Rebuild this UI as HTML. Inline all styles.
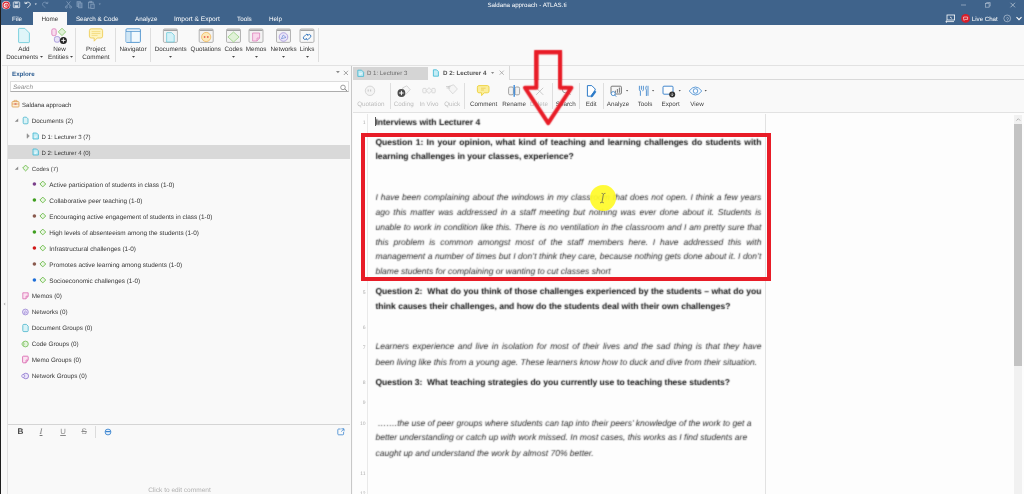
<!DOCTYPE html>
<html lang="en">
<head>
<meta charset="utf-8">
<title>Saldana approach - ATLAS.ti</title>
<style>
html,body{margin:0;padding:0;}
body{width:1024px;height:494px;overflow:hidden;position:relative;background:#f9f9f9;font-family:"Liberation Sans",sans-serif;font-size:6.3px;color:#3a3a3a;text-rendering:geometricPrecision;}
.a{position:absolute;}
.t{position:absolute;white-space:nowrap;line-height:8px;font-size:6.3px;margin-top:1.1px;}
.w{color:#fff;}
.c{text-align:center;transform:translateX(-50%);}
.rl{color:#333;}
.dis{color:#bcbcbc;}
.sep{position:absolute;width:1px;background:#dedede;}
.hl{position:absolute;height:1px;background:#e2e2e2;}
.doc{position:absolute;left:375.4px;width:386px;font-size:8.54px;line-height:14px;height:14px;color:#333;white-space:nowrap;margin:0;}
.doc b{color:#111;}
.doc i{color:#2c2c2c;}
.ln{position:absolute;font-size:5px;color:#adadad;width:10px;text-align:right;left:355.5px;line-height:6px;}
svg{position:absolute;overflow:visible;}
svg.sf{filter:url(#soft);}
.doc{filter:url(#soft);}
</style>
</head>
<body>
<div id="app" style="position:absolute;left:0;top:0;width:1024px;height:494px;will-change:transform;">
<svg class="defs" width="0" height="0" style="position:absolute"><defs><filter id="soft" x="-5%" y="-5%" width="110%" height="110%" color-interpolation-filters="sRGB"><feConvolveMatrix order="3" kernelMatrix="1 3 1 3 12 3 1 3 1" divisor="28" edgeMode="none" preserveAlpha="false"/></filter></defs></svg>
<div class="a" style="left:0;top:0;width:1024px;height:25px;background:#3f638b;"></div>
<div class="a" style="left:33px;top:12px;width:34px;height:14px;background:#f9f9f9;"></div>
<div class="t w" style="left:11.9px;top:14.5px;">File</div>
<div class="t " style="left:41.4px;top:14.5px;color:#333;">Home</div>
<div class="t w" style="left:75.9px;top:14.5px;">Search &amp; Code</div>
<div class="t w" style="left:135px;top:14.5px;">Analyze</div>
<div class="t w" style="left:174px;top:14.5px;font-size:6.6px;">Import &amp; Export</div>
<div class="t w" style="left:237px;top:14.5px;">Tools</div>
<div class="t w" style="left:269px;top:14.5px;">Help</div>
<div class="t w" style="left:487.4px;top:1px;font-size:6.18px;">Saldana approach - ATLAS.ti</div>
<div class="t w" style="left:971.8px;top:14.5px;font-size:6.13px;">Live Chat</div>
<svg style="left:0;top:0" width="110" height="12" viewBox="0 0 110 12">
<circle cx="6.1" cy="5.2" r="4.1" fill="#fbeff0"/><circle cx="6.1" cy="5.2" r="3.1" fill="none" stroke="#d8202c" stroke-width="1.2"/><circle cx="6.2" cy="5.2" r="1.1" fill="none" stroke="#d8202c" stroke-width="0.8"/><path d="M7.4 4 v2.2 q0 0.8 1 0.6" fill="none" stroke="#d8202c" stroke-width="0.7"/>
<g opacity="0.85"><rect x="13.3" y="1.9" width="6.4" height="5.8" rx="0.7" fill="#55769b" stroke="#fff" stroke-width="0.8"/><rect x="14.8" y="2" width="3" height="1.8" fill="#dfe7ef"/><rect x="14.6" y="5.2" width="3.6" height="2.4" fill="#eef2f6"/></g>
<path d="M25.2 3.6 L24.9 1.8 M25.2 3.6 L27.2 3.4 M25.3 3.4 C26.6 1.6 30.2 1.8 30.3 4.2 C30.3 5.8 28.6 6.6 27.4 7.6" fill="none" stroke="#f2f5f8" stroke-width="0.85"/>
<path d="M34.7 3.6 L36.9 3.6 L35.8 4.9 Z" fill="#e8edf3"/>
<path d="M47.6 3.6 L47.9 1.8 M47.6 3.6 L45.6 3.4 M47.5 3.4 C46.2 1.6 42.6 1.8 42.5 4.2 C42.5 5.8 44.2 6.6 45.4 7.6" fill="none" stroke="#7f9bbb" stroke-width="0.8"/>
<g stroke="#819cba" stroke-width="0.8" fill="none"><path d="M66.6 1.4 L70.4 6.2 M70.4 1.4 L66.6 6.2"/><circle cx="66.4" cy="7.1" r="1"/><circle cx="70.6" cy="7.1" r="1"/>
<rect x="77" y="1.7" width="3.4" height="4.8" fill="#5f7fa5"/><rect x="78.6" y="3" width="3.4" height="4.8" fill="#5f7fa5"/>
<rect x="88.4" y="2.2" width="4.8" height="5.8"/><rect x="89.8" y="1.3" width="2" height="1.4"/><rect x="90.8" y="4.2" width="3.4" height="4.2" fill="#4a6c94"/></g>
<path d="M98.7 3.6 L100.9 3.6 L99.8 4.9 Z" fill="#819cba"/>
</svg>
<svg style="left:940px;top:0" width="84" height="25" viewBox="0 0 84 25">
<g stroke="#c9d4e0" stroke-width="0.7" fill="none">
<g stroke="#a9bace"><path d="M21 5 L26 5"/>
<rect x="45.5" y="3.6" width="3.6" height="3.6"/><path d="M46.6 3.6 L46.6 2.5 L50.2 2.5 L50.2 6.1 L49.1 6.1"/></g>
<path d="M70.5 2.8 L75 7.3 M75 2.8 L70.5 7.3"/>
</g>
<g stroke="#fff" stroke-width="0.8" fill="none"><rect x="7" y="15" width="7.6" height="5"/><path d="M5.8 21.6 L14 21.6 M5.8 21.6 L7 20.6 M5.8 21.6 L7 22.6 M10 17 L12 18.4"/></g>
<circle cx="25.6" cy="18.4" r="4.4" fill="#d81e2a"/><path d="M23.6 17 h4 v2.4 h-2.4 l-1 1 v-1 h-0.6 z" fill="none" stroke="#fff" stroke-width="0.6"/>
<circle cx="67.2" cy="18.4" r="3.4" fill="none" stroke="#c9d4e0" stroke-width="0.6"/>
<path d="M76.5 17.2 L79 19.7 L81.5 17.2" fill="none" stroke="#fff" stroke-width="1.1"/>
</svg>
<div class="t " style="left:1006.1px;top:14.9px;color:#c9d4e0;font-size:5px;">?</div>
<div class="hl" style="left:2px;top:65px;width:1022px;"></div>
<div class="sep" style="left:74.6px;top:28px;height:34px;"></div>
<div class="sep" style="left:114.8px;top:28px;height:34px;"></div>
<div class="sep" style="left:149.8px;top:28px;height:34px;"></div>
<div class="sep" style="left:318px;top:28px;height:34px;"></div>
<div class="t c rl" style="left:23.8px;top:44.5px;">Add</div>
<div class="t c rl" style="left:22.2px;top:52.7px;">Documents</div>
<svg style="left:39.70px;top:56.47px" width="3" height="1.86" viewBox="0 0 3 1.86"><path d="M0 0 H3 L1.5 1.86 Z" fill="#444"/></svg>
<div class="t c rl" style="left:59.5px;top:44.5px;">New</div>
<div class="t c rl" style="left:58.4px;top:52.7px;">Entities</div>
<svg style="left:69.90px;top:56.47px" width="3" height="1.86" viewBox="0 0 3 1.86"><path d="M0 0 H3 L1.5 1.86 Z" fill="#444"/></svg>
<div class="t c rl" style="left:95.9px;top:44.5px;">Project</div>
<div class="t c rl" style="left:95.9px;top:52.7px;">Comment</div>
<div class="t c rl" style="left:133px;top:44.5px;">Navigator</div>
<svg style="left:131.50px;top:56.27px" width="3" height="1.86" viewBox="0 0 3 1.86"><path d="M0 0 H3 L1.5 1.86 Z" fill="#444"/></svg>
<div class="t c rl" style="left:170.7px;top:44.5px;">Documents</div>
<svg style="left:169.20px;top:56.27px" width="3" height="1.86" viewBox="0 0 3 1.86"><path d="M0 0 H3 L1.5 1.86 Z" fill="#444"/></svg>
<div class="t c rl" style="left:205.8px;top:44.5px;">Quotations</div>
<div class="t c rl" style="left:233.5px;top:44.5px;">Codes</div>
<svg style="left:232.00px;top:56.27px" width="3" height="1.86" viewBox="0 0 3 1.86"><path d="M0 0 H3 L1.5 1.86 Z" fill="#444"/></svg>
<div class="t c rl" style="left:256px;top:44.5px;">Memos</div>
<svg style="left:254.50px;top:56.27px" width="3" height="1.86" viewBox="0 0 3 1.86"><path d="M0 0 H3 L1.5 1.86 Z" fill="#444"/></svg>
<div class="t c rl" style="left:283.5px;top:44.5px;">Networks</div>
<svg style="left:282.00px;top:56.27px" width="3" height="1.86" viewBox="0 0 3 1.86"><path d="M0 0 H3 L1.5 1.86 Z" fill="#444"/></svg>
<div class="t c rl" style="left:307px;top:44.5px;">Links</div>
<svg style="left:305.50px;top:56.27px" width="3" height="1.86" viewBox="0 0 3 1.86"><path d="M0 0 H3 L1.5 1.86 Z" fill="#444"/></svg>
<svg style="left:0;top:25px" width="330" height="22" viewBox="0 0 330 22"><path d="M18.6 4 q0 -0.6 0.6 -0.6 h5.6 l4.6 4.6 v9 q0 0.6 -0.6 0.6 h-9.6 q-0.6 0 -0.6 -0.6 z" fill="#dff5f9" stroke="#62c6d8" stroke-width="0.8"/><rect x="51.8" y="3.8" width="4.4" height="6.8" rx="1.5" fill="#f8dcee" stroke="#dc78b8" stroke-width="0.8"/><path d="M62 3.2 l3.7 3.7 l-3.7 3.7 l-3.7 -3.7 z" fill="#e1f2d8" stroke="#80c464" stroke-width="0.8"/><rect x="54.4" y="11.6" width="5.4" height="5.6" rx="2" fill="#e8e3f6" stroke="#9a8ad4" stroke-width="0.8"/><circle cx="63.4" cy="15.4" r="3.5" fill="#242424"/><path d="M61.3 15.4 h4.2 M63.4 13.3 v4.2" stroke="#fff" stroke-width="0.9"/><path d="M91.2 3.8 h9.6 q1.8 0 1.8 1.8 v5.6 q0 1.8 -1.8 1.8 h-3.6 l-3 3.2 v-3.2 h-3 q-1.8 0 -1.8 -1.8 v-5.6 q0 -1.8 1.8 -1.8 z" fill="#fdf4bf" stroke="#ecc84a" stroke-width="0.8"/><path d="M91.6 6.6 h8.8 M91.6 8.5 h8.8 M91.6 10.4 h6" stroke="#ecc84a" stroke-width="0.5"/><rect x="126" y="3.8" width="14.4" height="13.6" rx="1" fill="#f2f9fd" stroke="#4a90cc" stroke-width="0.9"/><rect x="126.4" y="6.6" width="4.4" height="10.4" fill="#cfe6f5"/><path d="M126 6.4 h14.4 M131 6.4 v11" stroke="#4a90cc" stroke-width="0.8"/><rect x="163.4" y="4" width="14" height="13.4" rx="1.2" fill="#f3f3f3" stroke="#a2a2a2" stroke-width="0.8"/><path d="M163.8 5.3 h13.2" stroke="#9a9a9a" stroke-width="1.2"/><path d="M166.6 8 q0 -0.4 0.4 -0.4 h4.6 l2.6 2.6 v6.8 h-7.6 z" fill="#d4f1f7" stroke="#62c6d8" stroke-width="0.7"/><rect x="199.2" y="4" width="14" height="13.4" rx="1.2" fill="#f3f3f3" stroke="#a2a2a2" stroke-width="0.8"/><path d="M199.6 5.3 h13.2" stroke="#9a9a9a" stroke-width="1.2"/><circle cx="206.2" cy="12" r="4.6" fill="#fde9b8" stroke="#efb04a" stroke-width="0.7"/><circle cx="204.6" cy="12" r="0.9" fill="#e86a5a"/><circle cx="207.8" cy="12" r="0.9" fill="#e86a5a"/><rect x="226.5" y="4" width="14" height="13.4" rx="1.2" fill="#f3f3f3" stroke="#a2a2a2" stroke-width="0.8"/><path d="M226.9 5.3 h13.2" stroke="#9a9a9a" stroke-width="1.2"/><path d="M233.5 7 l5.6 5 l-5.6 5 l-5.6 -5 z" fill="#e1f2d8" stroke="#8ccc72" stroke-width="0.7"/><rect x="249" y="4" width="14" height="13.4" rx="1.2" fill="#f3f3f3" stroke="#a2a2a2" stroke-width="0.8"/><path d="M249.4 5.3 h13.2" stroke="#9a9a9a" stroke-width="1.2"/><path d="M252.6 8 h7 v5 l-2.6 3 h-4.4 z" fill="#f9d9ec" stroke="#dc78b8" stroke-width="0.7"/><path d="M257 16 v-3 h2.6" fill="none" stroke="#dc78b8" stroke-width="0.6"/><rect x="276.5" y="4" width="14" height="13.4" rx="1.2" fill="#f3f3f3" stroke="#a2a2a2" stroke-width="0.8"/><path d="M276.9 5.3 h13.2" stroke="#9a9a9a" stroke-width="1.2"/><circle cx="283.5" cy="12" r="4.3" fill="#e9e4f8" stroke="#9a86d6" stroke-width="0.7"/><path d="M281.4 13.8 l1.8 -3.8 l2.8 2.4 z" fill="none" stroke="#5a7fd0" stroke-width="0.6"/><rect x="300" y="4" width="14" height="13.4" rx="1.2" fill="#f8f8f8" stroke="#a2a2a2" stroke-width="0.8"/><path d="M300.4 5.3 h13.2" stroke="#9a9a9a" stroke-width="1.2"/><g fill="none" stroke="#3d7cc0" stroke-width="1"><path d="M306.8 13.2 l-0.8 0.8 a1.5 1.5 0 0 1 -2.2 -2.2 l2 -2 a1.5 1.5 0 0 1 2.2 0"/><path d="M307.4 10.8 l0.8 -0.8 a1.5 1.5 0 0 1 2.2 2.2 l-2 2 a1.5 1.5 0 0 1 -2.2 0"/></g></svg>
<div class="sep" style="left:7px;top:66px;height:428px;background:#e2e2e2;"></div>
<div class="t " style="left:12px;top:69.7px;color:#2f5f93;font-weight:bold;font-size:6.2px;">Explore</div>
<svg style="left:335.50px;top:71.22px" width="3.8" height="2.36" viewBox="0 0 3.8 2.36"><path d="M0 0 H3.8 L1.9 2.36 Z" fill="#8a8a8a"/></svg>
<svg style="left:343px;top:69.5px" width="6" height="6" viewBox="0 0 6 6"><path d="M0.8 0.8 L5 5 M5 0.8 L0.8 5" stroke="#8e8e8e" stroke-width="0.8"/></svg>
<div class="a" style="left:10px;top:81px;width:339px;height:11px;background:#fefefe;border:1px solid #dcdcdc;border-bottom-color:#adadad;box-sizing:border-box;"></div>
<div class="t " style="left:13px;top:83px;color:#8a8a8a;font-style:italic;">Search</div>
<svg style="left:339.5px;top:83.5px" width="8" height="8" viewBox="0 0 8 8"><circle cx="3" cy="3.4" r="2.3" fill="none" stroke="#858585" stroke-width="0.8"/><path d="M4.7 5 L7 6.8" stroke="#858585" stroke-width="1"/></svg>
<div class="a" style="left:8px;top:145.4px;width:342px;height:13.6px;background:#d9d9d9;"></div>
<div class="t " style="left:22px;top:100.7px;color:#363636;font-size:6.1px;">Saldana approach</div>
<div class="t " style="left:31.8px;top:116.7px;color:#363636;font-size:6.3px;">Documents (2)</div>
<div class="t " style="left:41.5px;top:132.7px;color:#363636;font-size:6.06px;">D 1: Lecturer 3 (7)</div>
<div class="t " style="left:41.5px;top:148.7px;color:#363636;font-size:6.06px;">D 2: Lecturer 4 (0)</div>
<div class="t " style="left:31.8px;top:164.7px;color:#363636;font-size:6.0px;">Codes (7)</div>
<div class="t " style="left:49.3px;top:180.7px;color:#363636;font-size:6.4px;">Active participation of students in class (1-0)</div>
<div class="t " style="left:49.3px;top:196.7px;color:#363636;font-size:6.4px;">Collaborative peer teaching (1-0)</div>
<div class="t " style="left:49.3px;top:212.7px;color:#363636;font-size:6.4px;">Encouraging active engagement of students in class (1-0)</div>
<div class="t " style="left:49.3px;top:228.7px;color:#363636;font-size:6.4px;">High levels of absenteeism among the students (1-0)</div>
<div class="t " style="left:49.3px;top:244.7px;color:#363636;font-size:6.4px;">Infrastructural challenges (1-0)</div>
<div class="t " style="left:49.3px;top:260.7px;color:#363636;font-size:6.4px;">Promotes active learning among students (1-0)</div>
<div class="t " style="left:49.3px;top:276.7px;color:#363636;font-size:6.4px;">Socioeconomic challenges (1-0)</div>
<div class="t " style="left:31.8px;top:292.1px;color:#363636;font-size:6.3px;">Memos (0)</div>
<div class="t " style="left:31.8px;top:308.1px;color:#363636;font-size:6.3px;">Networks (0)</div>
<div class="t " style="left:31.8px;top:324.1px;color:#363636;font-size:6.3px;">Document Groups (0)</div>
<div class="t " style="left:31.8px;top:340.1px;color:#363636;font-size:6.3px;">Code Groups (0)</div>
<div class="t " style="left:31.8px;top:356.1px;color:#363636;font-size:6.3px;">Memo Groups (0)</div>
<div class="t " style="left:31.8px;top:372.1px;color:#363636;font-size:6.3px;">Network Groups (0)</div>
<svg style="left:0;top:0.1px" width="60" height="400" viewBox="0 0 60 400"><rect x="12" y="101.6" width="7" height="5.4" rx="0.8" fill="#fdf0d8" stroke="#d9913a" stroke-width="0.7"/><path d="M14 101.6 v-1.2 h3 v1.2 M12 104 h7" fill="none" stroke="#d9913a" stroke-width="0.6"/><path d="M14.5 104 h2" stroke="#c23" stroke-width="0.8"/><path d="M14.8 121.8 l3.4 -3.4 v3.4 z" fill="#8a8a8a"/><path d="M27 133.7 l2.4 2.3 l-2.4 2.3 z" fill="#9a9a9a" stroke="#777" stroke-width="0.4"/><path d="M14.8 169.8 l3.4 -3.4 v3.4 z" fill="#8a8a8a"/><path d="M23.2 118.2 q0 -1 1 -1 h2.2 l1.6 1.6 v4 q0 1 -1 1 h-2.8 q-1 0 -1 -1 z" fill="#d9f3f7" stroke="#46b4cc" stroke-width="0.8"/><path d="M33 133 h3.6 l1.8 1.8 v4.2 h-5.4 z" fill="#bfeaf3" stroke="#3fb6d0" stroke-width="0.8"/><path d="M34.4 136.2 h2.8 M34.4 137.5 h1.8" stroke="#fff" stroke-width="0.6"/><path d="M33 149 h3.6 l1.8 1.8 v4.2 h-5.4 z" fill="#bfeaf3" stroke="#3fb6d0" stroke-width="0.8"/><path d="M34.4 152.2 h2.8 M34.4 153.5 h1.8" stroke="#fff" stroke-width="0.6"/><path d="M25.6 165.1 l2.9 2.9 l-2.9 2.9 l-2.9 -2.9 z" fill="#e9f6e2" stroke="#72bd52" stroke-width="0.95"/><circle cx="34.4" cy="184" r="1.8" fill="#7a3f8a"/><path d="M42.8 181.1 l2.9 2.9 l-2.9 2.9 l-2.9 -2.9 z" fill="#e9f6e2" stroke="#72bd52" stroke-width="0.95"/><circle cx="34.4" cy="200" r="1.8" fill="#3f9e1f"/><path d="M42.8 197.1 l2.9 2.9 l-2.9 2.9 l-2.9 -2.9 z" fill="#e9f6e2" stroke="#72bd52" stroke-width="0.95"/><circle cx="34.4" cy="216" r="1.8" fill="#8a5a4e"/><path d="M42.8 213.1 l2.9 2.9 l-2.9 2.9 l-2.9 -2.9 z" fill="#e9f6e2" stroke="#72bd52" stroke-width="0.95"/><circle cx="34.4" cy="232" r="1.8" fill="#3f9e1f"/><path d="M42.8 229.1 l2.9 2.9 l-2.9 2.9 l-2.9 -2.9 z" fill="#e9f6e2" stroke="#72bd52" stroke-width="0.95"/><circle cx="34.4" cy="248" r="1.8" fill="#d01818"/><path d="M42.8 245.1 l2.9 2.9 l-2.9 2.9 l-2.9 -2.9 z" fill="#e9f6e2" stroke="#72bd52" stroke-width="0.95"/><circle cx="34.4" cy="264" r="1.8" fill="#8a5a4e"/><path d="M42.8 261.1 l2.9 2.9 l-2.9 2.9 l-2.9 -2.9 z" fill="#e9f6e2" stroke="#72bd52" stroke-width="0.95"/><circle cx="34.4" cy="280" r="1.8" fill="#1f6fd8"/><path d="M42.8 277.1 l2.9 2.9 l-2.9 2.9 l-2.9 -2.9 z" fill="#e9f6e2" stroke="#72bd52" stroke-width="0.95"/><path d="M22.8 292.8 h5.4 v3.4 l-2.2 2.6 h-3.2 z" fill="#fbe3f1" stroke="#d65aa8" stroke-width="0.7"/><path d="M26 298.6 v-2.4 h2.2" fill="none" stroke="#d65aa8" stroke-width="0.6"/><circle cx="25.4" cy="312" r="2.9" fill="#ece6fa" stroke="#8b74cc" stroke-width="0.7"/><path d="M24 313.4 l1.4 -2.8 l1.6 2 z" fill="none" stroke="#8b74cc" stroke-width="0.5"/><path d="M22.8 325.4 q0 -1 1 -1 h2.6 l1.8 1.8 v4.4 q0 1 -1 1 h-3.4 q-1 0 -1 -1 z" fill="#d9f3f7" stroke="#46b4cc" stroke-width="0.8"/><circle cx="25.4" cy="344" r="2.9" fill="#e4f3dc" stroke="#6dbb4e" stroke-width="0.8"/><circle cx="23" cy="344" r="1.2" fill="#e4f3dc" stroke="#6dbb4e" stroke-width="0.6"/><path d="M22.6 357 q0 -0.8 0.8 -0.8 h4 q0.8 0 0.8 0.8 v2.8 l-2.2 3 h-2.6 q-0.8 0 -0.8 -0.8 z" fill="#fbe3f1" stroke="#d65aa8" stroke-width="0.8"/><path d="M26 362.6 v-2.6 h2.2" fill="none" stroke="#d65aa8" stroke-width="0.6"/><circle cx="25.8" cy="376" r="2.8" fill="#ece6fa" stroke="#8b74cc" stroke-width="0.8"/><circle cx="23.2" cy="376" r="1.6" fill="#ece6fa" stroke="#8b74cc" stroke-width="0.6"/><path d="M5.2 302.6 l-1.6 1.4 l1.6 1.4 z" fill="#aaa"/></svg>
<div class="hl" style="left:8px;top:424px;width:342px;background:#d5d5d5;"></div>
<div class="t " style="left:17.6px;top:426.6px;font-weight:bold;color:#444;font-size:8.2px;">B</div>
<div class="t " style="left:39.6px;top:426.4px;font-style:italic;color:#777;font-size:8.6px;font-family:'Liberation Serif',serif;text-decoration:underline;">I</div>
<div class="t " style="left:60.2px;top:426.6px;color:#8a8a8a;font-size:7.8px;text-decoration:underline;">U</div>
<div class="t " style="left:81.4px;top:426.6px;color:#8a8a8a;font-size:8px;text-decoration:line-through;">S</div>
<div class="sep" style="left:95px;top:426px;height:12px;background:#dcdcdc;"></div>
<svg style="left:103.5px;top:428px" width="8" height="8" viewBox="0 0 8 8"><circle cx="4" cy="4" r="2.9" fill="#eaf3fc" stroke="#3d86d0" stroke-width="0.9"/><path d="M1.4 3.6 h5.2" stroke="#3d86d0" stroke-width="1.2"/></svg>
<svg style="left:336.5px;top:428px" width="8" height="8" viewBox="0 0 8 8"><path d="M3.6 1 h-2 q-0.8 0 -0.8 0.8 v4.2 q0 0.8 0.8 0.8 h4.2 q0.8 0 0.8 -0.8 v-2" fill="none" stroke="#3d86d0" stroke-width="0.8"/><path d="M4.4 0.8 h2.6 v2.6 M7 0.8 l-2.8 2.8" fill="none" stroke="#3d86d0" stroke-width="0.8"/></svg>
<div class="t " style="left:148.2px;top:485.5px;color:#b0b0b0;font-size:6.55px;">Click to edit comment</div>
<div class="sep" style="left:351px;top:66px;height:428px;background:#c8c8c8;"></div>
<div class="a" style="left:353px;top:67px;width:75px;height:12.5px;background:#d5d5d5;"></div>
<div class="hl" style="left:509px;top:79px;width:515px;background:#d9d9d9;"></div>
<div class="sep" style="left:509px;top:66px;height:13px;background:#d9d9d9;"></div>
<div class="t " style="left:367px;top:69.3px;color:#6c6c6c;font-size:6.1px;">D 1: Lecturer 3</div>
<div class="t " style="left:443px;top:69.1px;color:#555;font-weight:bold;font-size:6.2px;">D 2: Lecturer 4</div>
<svg style="left:491.10px;top:71.61px" width="3.2" height="1.98" viewBox="0 0 3.2 1.98"><path d="M0 0 H3.2 L1.6 1.98 Z" fill="#8c8c8c"/></svg>
<svg style="left:499px;top:69.8px" width="6" height="6" viewBox="0 0 6 6"><path d="M0.6 0.6 L4.8 4.8 M4.8 0.6 L0.6 4.8" stroke="#999" stroke-width="0.7"/></svg>
<svg style="left:350px;top:66px" width="100" height="14" viewBox="0 0 100 14">
<path d="M7.8 4.2 h3.8 l2 2 v4.2 h-5.8 z" fill="#bfeaf3" stroke="#3fb6d0" stroke-width="0.8"/><path d="M9.2 7.4 h3 M9.2 8.8 h2" stroke="#fff" stroke-width="0.6"/>
<path d="M83.4 3.8 h3.2 l1.8 1.8 v4.6 h-5 z" fill="#c5edf6" stroke="#39b6d2" stroke-width="0.8"/>
</svg>
<div class="hl" style="left:353px;top:112px;width:671px;background:#e2e2e2;"></div>
<div class="sep" style="left:389.5px;top:83px;height:25.5px;"></div>
<div class="sep" style="left:464.4px;top:83px;height:25.5px;"></div>
<div class="sep" style="left:552.2px;top:83px;height:25.5px;"></div>
<div class="sep" style="left:579.3px;top:83px;height:25.5px;"></div>
<div class="sep" style="left:602.9px;top:83px;height:25.5px;"></div>
<div class="t c dis" style="left:370.8px;top:99.6px;">Quotation</div>
<div class="t c dis" style="left:403.8px;top:99.6px;">Coding</div>
<div class="t c dis" style="left:429px;top:99.6px;">In Vivo</div>
<div class="t c dis" style="left:452.2px;top:99.6px;">Quick</div>
<div class="t c rl" style="left:483.6px;top:99.6px;color:#444;">Comment</div>
<div class="t c rl" style="left:514.2px;top:99.6px;color:#444;">Rename</div>
<div class="t c dis" style="left:539px;top:99.6px;">Delete</div>
<div class="t c rl" style="left:565.7px;top:99.6px;color:#444;">Search</div>
<div class="t c rl" style="left:591.2px;top:99.6px;color:#444;">Edit</div>
<div class="t c rl" style="left:618px;top:99.6px;color:#444;">Analyze</div>
<div class="t c rl" style="left:645px;top:99.6px;color:#444;">Tools</div>
<div class="t c rl" style="left:670.6px;top:99.6px;color:#444;">Export</div>
<div class="t c rl" style="left:697px;top:99.6px;color:#444;">View</div>
<svg style="left:350px;top:80px" width="370" height="22" viewBox="0 0 370 22">
<circle cx="20" cy="10.8" r="4.7" fill="#f4f4f4" stroke="#c8c8c8" stroke-width="0.7"/><path d="M18.2 9.6 v2 M20.6 9.6 v2" stroke="#c8c8c8" stroke-width="1.1"/>
<path d="M52.4 8 l4.4 -2.2 l3.4 3.8 l-4.6 5 z" fill="#f6f6f6" stroke="#c4c4c4" stroke-width="0.7"/><circle cx="51.4" cy="13" r="3.9" fill="#4c4c4c"/><path d="M49.2 13 h4.4 M51.4 10.8 v4.4" stroke="#fff" stroke-width="1"/>
<g fill="#f6f6f6" stroke="#cdcdcd" stroke-width="0.7"><rect x="72.8" y="8.4" width="3.4" height="4.4" rx="0.8"/><rect x="81.8" y="8.4" width="3.4" height="4.4" rx="0.8"/><path d="M79 7.6 l2.8 3 l-2.8 3 l-2.8 -3 z"/></g>
<path d="M98.6 6.4 l5 -1.6 l3.8 4.2 l-4.6 4.8 l-3.6 -4 z" fill="#f5f5f5" stroke="#cdcdcd" stroke-width="0.7"/><path d="M96 6.6 h4.6 M96.6 8 h3.4" stroke="#c0c0c0" stroke-width="0.7"/>
<path d="M129 5.6 h8.4 q1.6 0 1.6 1.6 v4 q0 1.6 -1.6 1.6 h-3.2 l-2.6 2.8 v-2.8 h-2.6 q-1.6 0 -1.6 -1.6 v-4 q0 -1.6 1.6 -1.6 z" fill="#fbee9c" stroke="#ecd03a" stroke-width="0.9"/><path d="M131 8.2 h4.6 M131 10 h3" stroke="#e3b21e" stroke-width="0.5"/>
<rect x="158.6" y="7" width="4.8" height="7.8" rx="1.4" fill="#f1f1f1" stroke="#8e8e8e" stroke-width="0.8"/><rect x="165" y="7" width="4.6" height="7.8" rx="1.4" fill="#f1f1f1" stroke="#8e8e8e" stroke-width="0.8"/><path d="M164.2 5 v11.8" stroke="#3d8ad8" stroke-width="1.4"/>
<path d="M186.2 7.8 l7 7 M193.2 7.8 l-7 7" stroke="#bdbdbd" stroke-width="0.8"/>
<circle cx="215.4" cy="9.8" r="3" fill="none" stroke="#8a8a8a" stroke-width="0.8"/><path d="M217.6 12 l2.6 2.6" stroke="#8a8a8a" stroke-width="1"/>
<path d="M237.4 5.6 h4.4 l3.4 3.4 v1 l-4.4 6.2 h-3.4 z" fill="#fff" stroke="#2f7cc8" stroke-width="1"/><path d="M244.6 10.6 l1.8 1.2 l-3.6 5 l-2 0.6 l0.2 -2 z" fill="#2f7cc8"/>
<rect x="261" y="6.2" width="10.4" height="7.8" rx="1" fill="#f6f6f6" stroke="#6a6a6a" stroke-width="0.9"/><path d="M265.4 12.8 v-2.2 M267.4 12.8 v-3.8 M269.4 12.8 v-5.2" stroke="#6a6a6a" stroke-width="0.9"/><circle cx="263.2" cy="13.6" r="2" fill="#fff" stroke="#2f7cc8" stroke-width="0.8"/><path d="M264.6 15 l1.6 1.6" stroke="#2f7cc8" stroke-width="0.9"/>
<path d="M289.4 5.8 v4 q0 1 1 1 v5 M291.4 5.8 v4 M293.4 5.8 v4 q0 1 -1 1" fill="none" stroke="#2f7cc8" stroke-width="0.8"/><path d="M296.4 5.8 q-1.4 2.6 0 4.4 v5.8 M298 5.8 v10" fill="none" stroke="#2f7cc8" stroke-width="0.8"/>
<rect x="313" y="6.2" width="10" height="8" rx="1" fill="#fdfdfd" stroke="#2f7cc8" stroke-width="0.9"/><circle cx="322.2" cy="14.4" r="3" fill="#2e2e2e"/><path d="M322.2 12.8 v2.8 M321 14.6 l1.2 1.2 l1.2 -1.2" fill="none" stroke="#fff" stroke-width="0.6"/>
<path d="M339.2 11 q6.2 -8 12.6 0 q-6.4 8 -12.6 0 z" fill="#fafcff" stroke="#3a84cc" stroke-width="0.8"/><circle cx="345.5" cy="11" r="2.3" fill="none" stroke="#3a84cc" stroke-width="0.8"/>
<g fill="#555"><path d="M276 10 h2.2 l-1.1 1.5 z"/><path d="M302 10 h2.2 l-1.1 1.5 z"/><path d="M328.6 10 h2.2 l-1.1 1.5 z"/><path d="M354.6 10 h2.2 l-1.1 1.5 z"/></g>
</svg>
<div class="a" style="left:353px;top:113px;width:671px;height:381px;background:#fdfdfd;"></div>
<div class="sep" style="left:367px;top:114px;height:380px;background:#e9e9e9;"></div>
<div class="sep" style="left:765px;top:114px;height:380px;background:#e2e2e2;"></div>
<div class="a" style="left:1013.8px;top:115px;width:8.6px;height:379px;background:#f1f1f1;"></div>
<div class="a" style="left:1013.8px;top:124px;width:8.6px;height:241.5px;background:#c3c3c3;"></div>
<svg style="left:1013.8px;top:116px" width="9" height="6" viewBox="0 0 9 6"><path d="M2.4 4.6 L4.3 2.7 L6.2 4.6" fill="none" stroke="#a5a5a5" stroke-width="0.8"/></svg>
<div class="doc" style="top:115.17px;text-align:left;"><b>Interviews with Lecturer 4</b></div>
<div class="doc" style="top:135.17px;text-align:justify;text-align-last:justify;"><b>Question 1: In your opinion, what kind of teaching and learning challenges do students with</b></div>
<div class="doc" style="top:149.17px;text-align:left;"><b>learning challenges in your classes, experience?</b></div>
<div class="doc" style="top:190.17px;text-align:justify;text-align-last:justify;"><i>I have been complaining about the windows in my classroom that does not open. I think a few years</i></div>
<div class="doc" style="top:205.17px;text-align:justify;text-align-last:justify;"><i>ago this matter was addressed in a staff meeting but nothing was ever done about it. Students is</i></div>
<div class="doc" style="top:220.17px;text-align:justify;text-align-last:justify;"><i>unable to work in condition like this. There is no ventilation in the classroom and I am pretty sure that</i></div>
<div class="doc" style="top:235.17px;text-align:justify;text-align-last:justify;"><i>this problem is common amongst most of the staff members here. I have addressed this with</i></div>
<div class="doc" style="top:249.17px;text-align:justify;text-align-last:justify;"><i>management a number of times but I don&#8217;t think they care, because nothing gets done about it. I don&#8217;t</i></div>
<div class="doc" style="top:264.17px;text-align:left;"><i>blame students for complaining or wanting to cut classes short</i></div>
<div class="doc" style="top:284.17px;text-align:justify;text-align-last:justify;"><b>Question 2:&nbsp; What do you think of those challenges experienced by the students &#8211; what do you</b></div>
<div class="doc" style="top:299.17px;text-align:left;"><b>think causes their challenges, and how do the students deal with their own challenges?</b></div>
<div class="doc" style="top:339.17px;text-align:justify;text-align-last:justify;"><i>Learners experience and live in isolation for most of their lives and the sad thing is that they have</i></div>
<div class="doc" style="top:355.17px;text-align:left;"><i>been living like this from a young age. These learners know how to duck and dive from their situation.</i></div>
<div class="doc" style="top:375.17px;text-align:left;"><b>Question 3:&nbsp; What teaching strategies do you currently use to teaching these students?</b></div>
<div class="doc" style="top:416.17px;text-align:left;"><i>&nbsp;&#8230;&#8230;.the use of peer groups where students can tap into their peers&#8217; knowledge of the work to get a</i></div>
<div class="doc" style="top:430.17px;text-align:left;"><i>better understanding or catch up with work missed. In most cases, this works as I find students are</i></div>
<div class="doc" style="top:446.17px;text-align:left;"><i>caught up and understand the work by almost 70% better.</i></div>
<div class="ln" style="top:119.8px;">1</div>
<div class="ln" style="top:289.8px;">5</div>
<div class="ln" style="top:324.8px;">6</div>
<div class="ln" style="top:345.0px;">7</div>
<div class="ln" style="top:379.8px;">8</div>
<div class="ln" style="top:400.3px;">9</div>
<div class="ln" style="top:421.2px;">10</div>
<div class="ln" style="top:470.6px;">11</div>
<div class="ln" style="top:490.6px;">12</div>
<div class="a" style="left:375px;top:117.4px;width:0.6px;height:9px;background:#555;"></div>
<div class="a" style="left:590px;top:184.9px;width:26.3px;height:26.3px;border-radius:50%;background:rgba(255,250,40,0.92);"></div>
<svg style="left:598px;top:191px" width="10" height="14" viewBox="0 0 10 14"><path d="M3.6 2.4 q1.4 0 1.8 0.8 q0.6 -0.8 2 -0.8 M5.4 3.2 L4 11 M2 11.8 q1.4 0 2 -0.8 q0.4 0.8 1.8 0.8" fill="none" stroke="#555" stroke-width="0.7"/></svg>
<div class="a" style="left:361.2px;top:133px;width:410px;height:147.8px;border:4.1px solid #e81c27;box-sizing:border-box;"></div>
<svg class="sf" style="left:0;top:0" width="1024" height="140" viewBox="0 0 1024 140"><path d="M536.35 52.15 L560.05 52.15 L560.05 87.75 L571.4 87.75 L548.2 123.2 L525 87.75 L536.35 87.75 Z" fill="none" stroke="#e81c27" stroke-width="4.1" stroke-linejoin="round"/><path d="M536.35 80 L536.35 52.15 L560.05 52.15 L560.05 80" fill="none" stroke="#e81c27" stroke-width="4.1" stroke-linejoin="miter"/></svg>
<div class="a" style="left:0;top:0;width:1.3px;height:494px;background:#1e1e1e;"></div>
</div>
</body>
</html>
